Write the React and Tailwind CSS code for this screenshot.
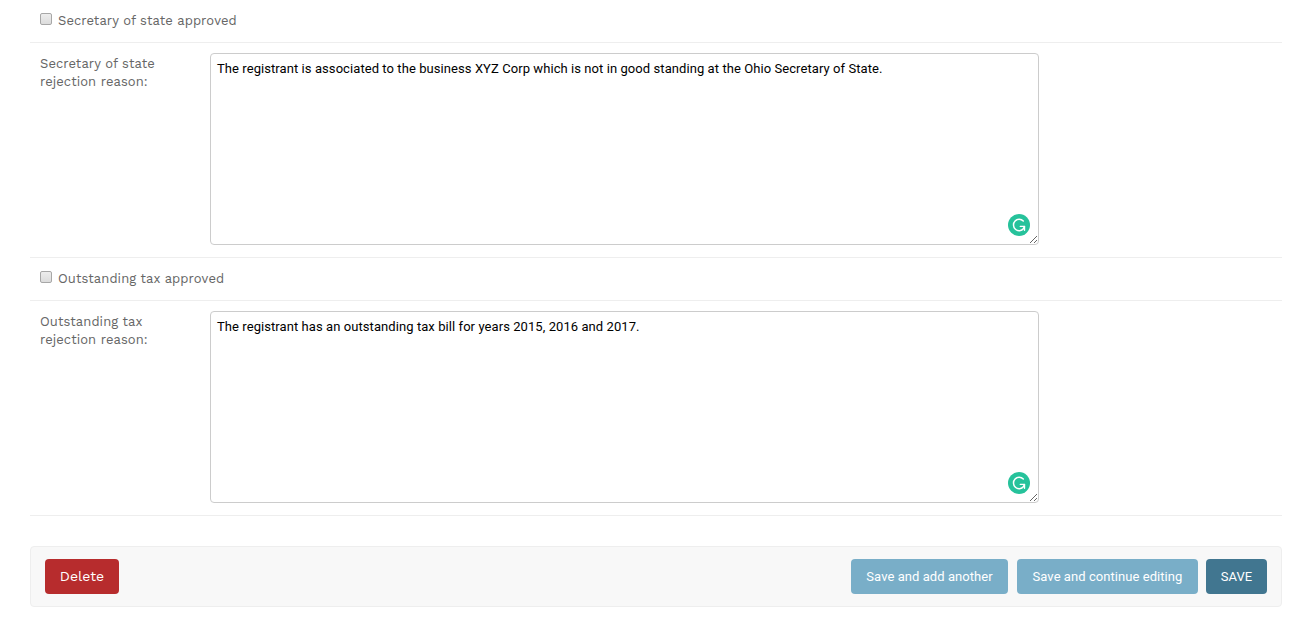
import React from 'react';

function AssistantBadge() {
  return (
    <svg className="absolute right-[9px] bottom-[9px] size-[22px]" viewBox="0 0 22 22" fill="none">
      <circle cx="11" cy="11" r="11" fill="#26c29b" />
      <path d="M15.3 7A5.7 5.7 0 1 0 15.6 14.6L16.4 12.6" stroke="#fff" strokeWidth="1.5" strokeLinecap="round" />
      <path d="M12.3 12.4H16.5V16.3" stroke="#fff" strokeWidth="1.4" strokeLinecap="round" strokeLinejoin="round" />
    </svg>
  );
}

function CheckboxRow({ children }) {
  return (
    <label className="flex h-[43px] items-start border-b border-[#eee] pt-3 pl-[10px]">
      <input
        type="checkbox"
        className="mt-px size-3 shrink-0 appearance-none rounded-[2px] border border-[#a7a7a7] bg-linear-to-b from-[#ededed] to-[#dcdcdc]"
      />
      <span className="ml-[6px] text-[13px] leading-[18px] tracking-[0.07px]">{children}</span>
    </label>
  );
}

function ReasonRow({ label, value }) {
  return (
    <div className="flex h-[215px] items-start border-b border-[#eee] pt-[10px] pl-[10px]">
      <div className="mt-[2px] w-[170px] shrink-0 text-[13px] leading-[18px] tracking-[0.07px] whitespace-pre-line">{label}</div>
      <div className="relative h-[192px] w-[829px]">
        <textarea
          defaultValue={value}
          spellCheck={false}
          className="block h-full w-full resize rounded-[4px] border border-[#ccc] bg-white px-[6px] py-[5px] font-[Roboto,sans-serif] text-[13px] leading-[20px] tracking-[0.073px] text-black outline-none"
        />
        <AssistantBadge />
      </div>
    </div>
  );
}

export default function App() {
  return (
    <main className="h-[635px] overflow-hidden bg-white pr-[26px] pl-[30px] font-['Work_Sans',Inter,sans-serif] text-[#666]">
      <CheckboxRow>Secretary of state approved</CheckboxRow>
      <ReasonRow
        label={'Secretary of state\nrejection reason:'}
        value="The registrant is associated to the business XYZ Corp which is not in good standing at the Ohio Secretary of State."
      />
      <CheckboxRow>Outstanding tax approved</CheckboxRow>
      <ReasonRow
        label={'Outstanding tax\nrejection reason:'}
        value="The registrant has an outstanding tax bill for years 2015, 2016 and 2017."
      />
      <footer className="mt-[30px] flex h-[61px] items-start rounded-[4px] border border-[#eee] bg-[#f8f8f8] px-[14px] pt-3 text-[13px] text-white">
        <button className="h-[35px] w-[74px] rounded-[4px] bg-[#b72c2d] text-[14px]">Delete</button>
        <div className="ml-auto flex font-[Roboto,sans-serif] tracking-[0.06px]">
          <button className="h-[35px] w-[157px] rounded-[4px] bg-[#79aec8]">Save and add another</button>
          <button className="ml-[9px] h-[35px] w-[181px] rounded-[4px] bg-[#79aec8]">Save and continue editing</button>
          <button className="ml-2 h-[35px] w-[61px] rounded-[4px] bg-[#417690]">SAVE</button>
        </div>
      </footer>
    </main>
  );
}
